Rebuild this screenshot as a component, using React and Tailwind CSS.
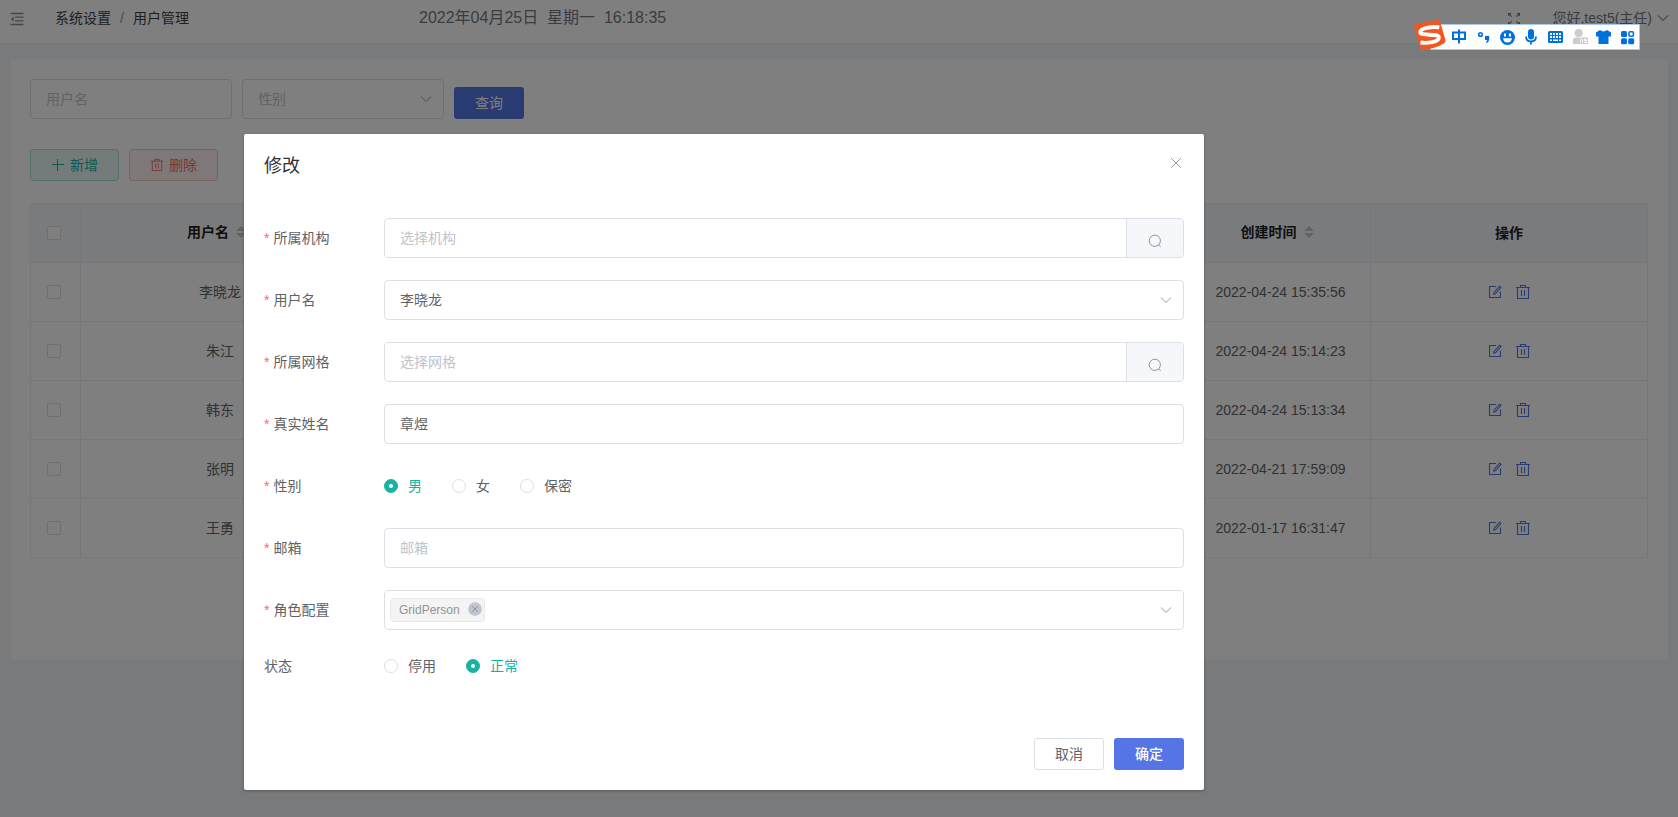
import clsx from "clsx";

const rows = [
  { name: "李晓龙", time: "2022-04-24 15:35:56" },
  { name: "朱江", time: "2022-04-24 15:14:23" },
  { name: "韩东", time: "2022-04-24 15:13:34" },
  { name: "张明", time: "2022-04-21 17:59:09" },
  { name: "王勇", time: "2022-01-17 16:31:47" },
];

const cols = "grid grid-cols-[50px_279px_277px_277px_277px_180px_277px]";

function Chevron({ className }) {
  return (
    <svg className={clsx("w-[14px] h-[14px] shrink-0", className)} viewBox="0 0 14 14" fill="none" stroke="currentColor">
      <path d="M2 4.500 7 9.500 12 4.500" strokeWidth="1.100" />
    </svg>
  );
}

function Trash({ className }) {
  return (
    <svg className={clsx("shrink-0", className)} viewBox="0 0 14 14" fill="none" stroke="currentColor" strokeWidth="1.100">
      <path d="M0 2.500h14M4.500 2.500V.5h5v2M1.500 2.500v11h11v-11M5.500 5v6M8.500 5v6" />
    </svg>
  );
}

function Edit() {
  return (
    <svg className="w-[14px] h-[14px] shrink-0" viewBox="0 0 14 14" fill="none" stroke="currentColor" strokeWidth="1.100">
      <path d="M8 1.500H1.500v11h11V6.500" />
      <path d="M11.700 1.200 6.200 7.200 5.700 9.200 7.600 8.500 13 2.400z" />
    </svg>
  );
}

function Search() {
  return (
    <svg className="w-[14px] h-[14px]" viewBox="0 0 14 14" fill="none" stroke="currentColor">
      <circle cx="6.800" cy="6.800" r="5.600" />
      <path d="m10.600 10.800 2 2" />
    </svg>
  );
}

function SortCaret() {
  return (
    <svg className="w-[10px] h-[12px] ml-[7px]" viewBox="0 0 10 12" fill="#c0c4cc">
      <path d="M5 0 10 5H0zM5 12 0 7h10z" />
    </svg>
  );
}

function Checkbox() {
  return <span className="w-[14px] h-[14px] mr-[3px] rounded-[2px] border border-[#dcdfe6] bg-white" />;
}

function Cell({ children, head, sortable }) {
  return (
    <div
      className={clsx(
        "flex items-center justify-center border-r border-b border-[#ebeef5]",
        head && "font-bold text-[#1f2021]",
        sortable && "pr-[7px] pb-[2px]"
      )}
    >
      {children}
      {sortable && <SortCaret />}
    </div>
  );
}

function Radio({ label, checked, className }) {
  return (
    <label className={clsx("flex items-center", checked ? "text-[#13b1a0]" : "text-[#606266]", className)}>
      <span
        className={clsx(
          "w-[14px] h-[14px] rounded-full border flex items-center justify-center",
          checked ? "border-[#18b3a3] bg-[#18b3a3]" : "border-[#dcdfe6] bg-white"
        )}
      >
        {checked && <span className="w-1 h-1 rounded-full bg-white" />}
      </span>
      <span className="ml-[10px]">{label}</span>
    </label>
  );
}

function Field({ label, optional, children }) {
  return (
    <div className="flex items-center h-10">
      <div className="w-[120px] text-[#606266] flex">
        {!optional && <span className="text-[#f56c6c] mr-1">*</span>}
        {label}
      </div>
      <div className="flex-1 h-10 flex items-center">{children}</div>
    </div>
  );
}

function Box({ children, className }) {
  return (
    <div className={clsx("h-10 rounded border border-[#dcdfe6] flex items-center flex-1 bg-white", className)}>
      {children}
    </div>
  );
}

function SearchBox({ placeholder }) {
  return (
    <Box className="pl-[15px] overflow-hidden">
      <span className="flex-1 text-[#c0c4cc]">{placeholder}</span>
      <button className="w-[57px] h-full bg-[#f5f7fa] border-l border-[#dcdfe6] text-[#909399] flex items-center justify-center pt-[6px]">
        <Search />
      </button>
    </Box>
  );
}

function Header() {
  return (
    <header className="h-11 bg-white border-b border-[#e8ecf2] flex items-center pb-[7px] pl-[10px] pr-2 text-[#75787e]">
      <svg className="w-[14px] h-[14px] mt-px" viewBox="0 0 14 14" fill="none" stroke="#8a8d94" strokeWidth="1.300">
        <path d="M.5 1.500h13M5 5.200h8.500M5 8.800h8.500M.5 12.500h13" />
        <path d="M3.600 4.500v5L.8 7z" fill="#8a8d94" stroke="none" />
      </svg>
      <div className="ml-[31px] w-[364px] flex text-[#3c3f44]">
        <span>系统设置</span>
        <span className="w-[22px] text-center text-[#909399]">/</span>
        <span>用户管理</span>
      </div>
      <div className="text-[16px] whitespace-pre">2022年04月25日  星期一  16:18:35</div>
      <svg className="w-[12px] h-[12px] ml-auto mt-px mr-8" viewBox="0 0 12 12" fill="none" stroke="#75787e" strokeWidth="1.100">
        <path d="M.5 3V.5H3M.5.5l3.200 3.200M9 .5h2.500V3M11.500.5 8.300 3.700M.5 9v2.500H3M.5 11.500l3.200-3.200M9 11.500h2.500V9M11.500 11.500 8.300 8.300" />
      </svg>
      <div className="flex items-center">
        您好,test5(主任)
        <Chevron className="ml-1 text-[#909399]" />
      </div>
    </header>
  );
}

function UserTable() {
  return (
    <div className="mt-[22px] w-[1618px] border-t border-l border-[#ebeef5] text-[#606266]">
      <div className={clsx(cols, "h-[59px] bg-[#f5f7fa]")}>
        <Cell head><Checkbox /></Cell>
        <Cell head sortable>用户名</Cell>
        <Cell head />
        <Cell head />
        <Cell head />
        <Cell head sortable>创建时间</Cell>
        <Cell head>操作</Cell>
      </div>
      {rows.map((row) => (
        <div key={row.name} className={clsx(cols, "h-[59px]")}>
          <Cell><Checkbox /></Cell>
          <Cell>{row.name}</Cell>
          <Cell />
          <Cell />
          <Cell />
          <Cell>{row.time}</Cell>
          <Cell>
            <span className="flex items-center gap-[14px] text-[#5575e6]">
              <Edit />
              <Trash className="w-[14px] h-[14px]" />
            </span>
          </Cell>
        </div>
      ))}
    </div>
  );
}

function EditDialog() {
  return (
    <div className="w-[960px] h-[656px] bg-white rounded-[2px] shadow-[0_1px_3px_rgba(0,0,0,0.3)] px-5 flex flex-col">
      <div className="flex justify-between h-[84px]">
        <h2 className="text-[18px] leading-6 text-[#303133] mt-5">修改</h2>
        <svg className="w-[10px] h-[10px] mt-6 mr-[3px]" viewBox="0 0 10 10" stroke="#909399">
          <path d="m.3.3 9.400 9.400M9.700.3.3 9.700" />
        </svg>
      </div>
      <div className="flex flex-col gap-[22px]">
        <Field label="所属机构"><SearchBox placeholder="选择机构" /></Field>
        <Field label="用户名">
          <Box className="pl-[15px] pr-[10px] justify-between text-[#606266]">
            李晓龙
            <Chevron className="text-[#c0c4cc]" />
          </Box>
        </Field>
        <Field label="所属网格"><SearchBox placeholder="选择网格" /></Field>
        <Field label="真实姓名"><Box className="pl-[15px] text-[#606266]">章煜</Box></Field>
        <Field label="性别">
          <Radio label="男" checked />
          <Radio label="女" className="ml-[30px]" />
          <Radio label="保密" className="ml-[30px]" />
        </Field>
        <Field label="邮箱"><Box className="pl-[15px] text-[#c0c4cc]">邮箱</Box></Field>
        <Field label="角色配置">
          <Box className="pl-[5px] pr-[10px] justify-between">
            <span className="h-6 pl-2 pr-[2px] rounded border border-[#e9e9eb] bg-[#f4f4f5] text-[#909399] text-xs flex items-center">
              GridPerson
              <svg className="w-[14px] h-[14px] ml-2 mb-[2px]" viewBox="0 0 14 14">
                <circle cx="7" cy="7" r="6.800" fill="#c0c4cc" />
                <path d="m4.200 4.200 5.600 5.600M9.800 4.200 4.200 9.800" stroke="#909399" />
              </svg>
            </span>
            <Chevron className="text-[#c0c4cc]" />
          </Box>
        </Field>
      </div>
      <div className="mt-4">
        <Field label="状态" optional>
          <Radio label="停用" />
          <Radio label="正常" checked className="ml-[30px]" />
        </Field>
      </div>
      <div className="mt-auto mb-5 flex justify-end gap-[10px]">
        <button className="w-[70px] h-8 rounded-[3px] border border-[#dcdfe6] text-[#606266]">取消</button>
        <button className="w-[70px] h-8 rounded-[3px] bg-[#5575e6] text-white font-medium">确定</button>
      </div>
    </div>
  );
}

// Input method toolbar floating on top of everything
function ImeBar() {
  return (
    <div className="absolute left-[1414px] top-[19px] w-[226px] h-8">
      <div className="absolute left-4 right-0 top-[5px] h-[26px] bg-white border border-[#a9c8ec]" />
      <svg className="absolute inset-0 w-[226px] h-8" viewBox="0 0 226 32" fill="#0070dc">
        <path d="M2 4.800 23.500 1.100q2-.3 2.600 1.700l5.300 18q.6 2.400-1.600 3.600-7.800 4.800-20.400 6.500-2.600.4-3.300-2L.3 7.500Q-.2 5.200 2 4.800z" fill="#f4561f" />
        <path d="M25.300 8.300C17 7.300 6.500 9.200 6.300 13c-.2 4.600 18.300.8 18.500 5.300.2 4.800-11.800 6.200-18.300 5.200" fill="none" stroke="#fff" strokeWidth="3.900" />
        <path d="M39 13.500h12v6.500H39zM45 10.500v14" fill="none" stroke="#0070dc" strokeWidth="2" />
        <circle cx="66.500" cy="15.500" r="1.800" fill="none" stroke="#0070dc" strokeWidth="1.600" />
        <path d="M71 17h4.200v3.500q-.4 3-3 3.800v-1.600q1-.6 1-1.700H71z" />
        <circle cx="93.500" cy="18.500" r="7.500" />
        <path d="M90 14.500h2v3h-2zM95 14.500h2v3h-2zM89 19.300h9q-.6 4.200-4.500 4.200T89 19.300z" fill="#fff" />
        <rect x="114" y="10" width="6" height="10.500" rx="3" />
        <path d="M112 17.500q0 5 5 5t5-5M117 22.500v3" fill="none" stroke="#0070dc" strokeWidth="1.800" />
        <rect x="134" y="12" width="15" height="12" rx="1.500" />
        <path d="M136 14h2v2h-2zM139 14h2v2h-2zM142 14h2v2h-2zM145 14h2v2h-2zM136 17h2v2h-2zM139 17h2v2h-2zM142 17h2v2h-2zM145 17h2v2h-2zM136 20.500h2v1.500h-2zM139 20.500h5v1.500h-5zM145 20.500h2v1.500h-2z" fill="#fff" />
        <g fill="#cccccc">
          <circle cx="164.700" cy="14" r="4" />
          <path d="M159 25v-4q0-2.500 3-2.500h4V25zM166.500 18.500H174V25h-7.500z" />
          <path d="M168.300 20v3.800M172.800 20.300h-2.300v1.400h2.200v1.900h-2.500" fill="none" stroke="#fff" strokeWidth="1" />
        </g>
        <path d="M182 13.500 186 11q3.500 2.800 7 0l4 2.500v4h-2.500V25h-10v-7.500H182z" />
        <rect x="207" y="12" width="6" height="6" rx="1.500" />
        <rect x="207" y="19.300" width="6" height="6" rx="1.500" />
        <rect x="214.200" y="19.300" width="6" height="6" rx="1.500" />
        <rect x="215" y="12.800" width="4.400" height="4.400" rx="1" fill="none" stroke="#0070dc" strokeWidth="1.600" />
      </svg>
    </div>
  );
}

export default function App() {
  return (
    <div className="relative w-[1678px] h-[817px] overflow-hidden bg-[#f1f4f8] text-[14px] leading-5 font-['Liberation_Sans','Noto_Sans_CJK_SC',sans-serif]">
      <Header />
      <main className="mx-[10px] mt-[15px] h-[601px] bg-white rounded px-5 pt-5">
        <div className="flex items-end gap-[10px]">
          <Box className="max-w-[202px] pl-[15px] text-[#c0c4cc]">用户名</Box>
          <Box className="max-w-[202px] pl-[15px] pr-[10px] justify-between text-[#c0c4cc]">
            性别
            <Chevron />
          </Box>
          <button className="w-[70px] h-8 rounded-[3px] bg-[#5575e6] text-white">查询</button>
        </div>
        <div className="flex gap-[10px] mt-[30px]">
          <button className="w-[89px] h-8 rounded-[3px] border border-[#a3e1da] bg-[#e8f7f6] text-[#17b3a3] flex items-center justify-center gap-[6px] pl-px">
            <svg className="w-[12px] h-[12px]" viewBox="0 0 12 12" stroke="currentColor">
              <path d="M0 5.500h12M5.500 0v12" />
            </svg>
            新增
          </button>
          <button className="w-[89px] h-8 rounded-[3px] border border-[#fbc4c4] bg-[#fef0f0] text-[#f56c6c] flex items-center justify-center gap-[6px] pl-px">
            <Trash className="w-[12px] h-[14px]" />
            删除
          </button>
        </div>
        <UserTable />
      </main>
      <div className="absolute inset-0 bg-black/50 flex justify-center items-start pt-[134px] pr-[230px]">
        <EditDialog />
      </div>
      <ImeBar />
    </div>
  );
}
